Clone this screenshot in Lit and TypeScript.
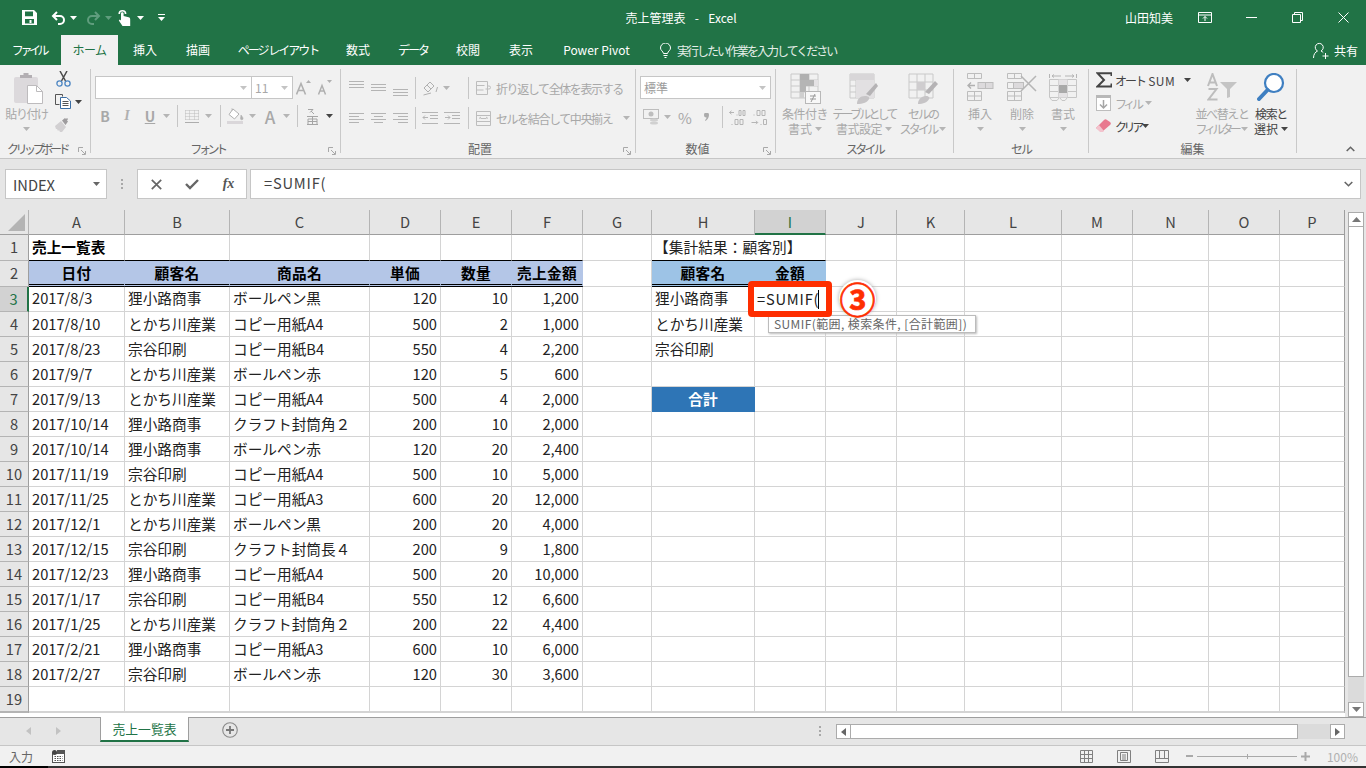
import { LitElement, html, css, nothing } from 'lit';
import { customElement } from 'lit/decorators.js';

const caret = (color = '#b5b5b5') => html`<svg class="caret" width="7" height="4" viewBox="0 0 7 4"><path d="M0 0h7L3.5 4z" fill=${color}/></svg>`;

const launcher = () => html`<svg width="8" height="8" viewBox="0 0 8 8"><path d="M.5 5V.5H5M3 3l4 4M7.5 4v3.5H4" fill="none" stroke="#a8a8a8"/></svg>`;

const lines = (ys: number[], widths: number[], dx: number[] = []) => html`<svg width="15" height="15" viewBox="0 0 15 15"><path d=${ys.map((y, i) => `M${dx[i] ?? 0} ${y + 0.5}h${widths[i]}`).join('')} stroke="#b4b4b4" fill="none"/></svg>`;

const icons = {
  save: html`<svg width="15" height="15" viewBox="0 0 15 15"><path fill-rule="evenodd" d="M0 0h12l3 3v12H0zM3 1.6v4.6h8V1.6zM3 9v4.4h9V9z" fill="#fff"/><rect x="7.5" y="10" width="2" height="3" fill="#fff"/></svg>`,
  undo: html`<svg width="15" height="14" viewBox="0 0 15 14"><path d="M6 1 2 5l4 4M2.5 5H9a4 4 0 0 1 0 8H7" fill="none" stroke="#fff" stroke-width="2"/></svg>`,
  redo: html`<svg width="15" height="14" viewBox="0 0 15 14"><path d="M9 1l4 4-4 4M12.5 5H6a4 4 0 0 0 0 8h2" fill="none" stroke="#5f9d7d" stroke-width="2"/></svg>`,
  touch: html`<svg width="13" height="17" viewBox="0 0 13 17"><path d="M1.2 5a3.2 3.2 0 0 1 6.4 0" fill="none" stroke="#fff" stroke-width="1.6"/><path d="M3 4.500a1.300 1.300 0 0 1 2.600 0V7l5 1.200c1.200.3 1.600 1.200 1.600 2.300V17H4.500L.8 11.600l1-1L3 11.500z" fill="#fff"/></svg>`,
  custom: html`<svg width="7" height="7" viewBox="0 0 7 7"><path d="M0 .5h7" stroke="#fff"/><path d="M0 3h7L3.500 7z" fill="#fff"/></svg>`,
  ribbonOpt: html`<svg width="14" height="11" viewBox="0 0 14 11"><path d="M.5.5h13v10H.5zM.5 3h13M7 9V4.500M5 6.500l2-2 2 2" fill="none" stroke="#fff"/></svg>`,
  min: html`<svg width="11" height="1" viewBox="0 0 11 1"><path d="M0 .5h11" stroke="#fff"/></svg>`,
  restore: html`<svg width="11" height="11" viewBox="0 0 11 11"><path d="M.5 2.500h8v8h-8zM2.500 2.500v-2h8v8h-2" fill="none" stroke="#fff"/></svg>`,
  close: html`<svg width="11" height="11" viewBox="0 0 11 11"><path d="M.5.5l10 10M10.500.5l-10 10" stroke="#fff"/></svg>`,
  bulb: html`<svg width="11" height="15" viewBox="0 0 11 15"><path d="M3.500 10.500C3 8 .5 7.500.5 5a5 5 0 0 1 10 0c0 2.500-2.500 3-3 5.500zM3.500 12.500h4M4.500 14.500h2" fill="none" stroke="#fff"/></svg>`,
  share: html`<svg width="16" height="17" viewBox="0 0 16 17"><path d="M.5 16c0-4 2-6 4-7a4 4 0 1 1 3.500 0c1 .4 1.700 1 2.300 1.700M12.500 11v6M9.500 14h6" fill="none" stroke="#fff"/></svg>`,
  paste: html`<svg width="30" height="31" viewBox="0 0 30 31"><rect x="0" y="4" width="24" height="26" rx="2" fill="#dcd9dc"/><path d="M6 5V2h3.500V0h5v2H18v3z" fill="#b3afb3"/><path d="M13.500 12.500h9l6 6v12h-15z" fill="#fff" stroke="#bdbbbd"/><path d="M22.500 12.500v6h6" fill="none" stroke="#bdbbbd"/></svg>`,
  cut: html`<svg width="15" height="16" viewBox="0 0 15 16"><path d="M4 0l5.500 10M11 0 5.500 10" stroke="#4a4a4a" stroke-width="1.500" fill="none"/><circle cx="3.500" cy="12.500" r="2.600" fill="none" stroke="#4d86c2" stroke-width="1.300"/><circle cx="11.500" cy="12.500" r="2.600" fill="none" stroke="#4d86c2" stroke-width="1.300"/></svg>`,
  copy: html`<svg width="16" height="15" viewBox="0 0 16 15"><path d="M.5.5h7v2M.5.500v10h4" fill="none" stroke="#555"/><path d="M5.500 3.500h6l4 3.500v7.500h-10z" fill="#fff" stroke="#3c6ea5"/><path d="M7.500 7.500h6M7.500 9.500h6M7.500 11.500h6" stroke="#555"/></svg>`,
  brush: html`<svg width="16" height="14" viewBox="0 0 16 14"><path d="M0 8l6-5 5 6-4 5H5l-1-2-1 1-1-2-1 0z" fill="#d2d0d2"/><path d="M7 2.500 10 0l1 1 1-1 1 1-1 1.500 1 1-2.500 3.500z" fill="#9e9c9e"/></svg>`,
  aUp: html`<svg width="15" height="15" viewBox="0 0 15 15"><path d="M.5 14.500 5 3.500l4.500 11M2.200 10.500h5.600" fill="none" stroke="#b0b0b0" stroke-width="1.600"/><path d="M10 3h5L12.500 0z" fill="#b0b0b0"/></svg>`,
  aDown: html`<svg width="15" height="15" viewBox="0 0 15 15"><path d="M1.500 14.500 5 5.500l3.500 9M2.800 11h4.400" fill="none" stroke="#b0b0b0" stroke-width="1.500"/><path d="M10 0h5l-2.500 3z" fill="#b0b0b0"/></svg>`,
  borders: html`<svg width="14" height="13" viewBox="0 0 14 13"><path d="M.5.500h13M.500 3.500h13M.500 6.500h13M.500 9.500h13M.500.5v9M4.500.5v9M9.500.5v9M13.500.5v9" fill="none" stroke="#bdbdbd" stroke-dasharray="1 1"/><path d="M0 12.500h14" stroke="#adadad"/></svg>`,
  fill: html`<svg width="17" height="16" viewBox="0 0 17 16"><path d="M6 1l6 5-4.500 5L2 6.500z" fill="#fff" stroke="#b0b0b0"/><path d="M5 3 5 0M14 7c1 1.500 2 2.500 2 3.500a1 1 0 0 1-2.500 0c0-1 .5-2 .5-3.500z" fill="#b0b0b0" stroke="#b0b0b0" stroke-width=".6"/><rect y="13" width="16" height="3" fill="#dad7da"/></svg>`,
  furi: html`<svg width="12" height="17" viewBox="0 0 12 17"><path d="M2 1.500h5l-3 3M5 3l3 3M1 8.500h11M1 16.500h11M2 11h9v5.500H2zM6.500 8.500v8M2 13.500h9" fill="none" stroke="#a5a5a5"/></svg>`,
  orient: html`<svg width="15" height="15" viewBox="0 0 15 15"><path d="M1 7 7 1l4 4-6 6zM4 4l4 4M.5 14 8 12M13 11l1.500-5" fill="none" stroke="#b0b0b0"/></svg>`,
  indentL: html`<svg width="16" height="12" viewBox="0 0 16 12"><path d="M0 .500h16M8 3.500h8M8 6.500h8M0 11.500h16" stroke="#b5b5b5"/><path d="M6 5.500H1M3 3.500l-2 2 2 2" fill="none" stroke="#b5b5b5"/></svg>`,
  indentR: html`<svg width="16" height="12" viewBox="0 0 16 12"><path d="M0 .500h16M8 3.500h8M8 6.500h8M0 11.500h16" stroke="#b5b5b5"/><path d="M1 5.500h5M4 3.500l2 2-2 2" fill="none" stroke="#b5b5b5"/></svg>`,
  wrap: html`<svg width="15" height="14" viewBox="0 0 15 14"><path d="M.5.5h11v13H.5zM.5 4.500h8M.5 9h7" fill="none" stroke="#bdbdbd"/><path d="M9.500 8H13a1.500 1.500 0 0 0 0-3h-2" fill="none" stroke="#bdbdbd"/></svg>`,
  merge: html`<svg width="15" height="15" viewBox="0 0 15 15"><path d="M.5.5h14v14H.5zM.5 4.500h14M.5 10.500h14M4.500 7.500h6M3 7.500l2-1.500M12 7.500l-2-1.500" fill="none" stroke="#bdbdbd"/></svg>`,
  account: html`<svg width="16" height="17" viewBox="0 0 16 17"><rect x=".5" y=".5" width="15" height="9" fill="none" stroke="#bdbdbd"/><circle cx="8" cy="5" r="2.500" fill="#bdbdbd"/><ellipse cx="11" cy="11" rx="4" ry="1.500" fill="#d0d0d0"/><ellipse cx="11" cy="14" rx="4" ry="1.500" fill="#d0d0d0"/></svg>`,
  comma: html`<svg width="5" height="8" viewBox="0 0 5 8"><path d="M0 2a2.500 2.500 0 1 1 5 0c0 3-2 5-3.500 6L1 7c1-.7 1.500-1.500 1.500-2.500A2.500 2.500 0 0 1 0 2z" fill="#ababab"/></svg>`,
  decUp: html`<svg width="17" height="15" viewBox="0 0 17 15"><path d="M5 2.500H.5M2.500.8.500 2.500l2 1.700" fill="none" stroke="#b5b5b5"/><path d="M8 4.500v1M10 .5h2v5h-2zM14 .5h2v5h-2zM3 14v1M6 9.500h3v5H6zM11 9.500h3v5h-3z" fill="none" stroke="#b5b5b5"/></svg>`,
  decDown: html`<svg width="17" height="15" viewBox="0 0 17 15"><path d="M.5 12.500h6M5 10.800l1.700 1.700L5 14.200" fill="none" stroke="#b5b5b5"/><path d="M3 4.500v1M6 .5h3v5H6zM11 .5h3v5h-3zM10 14v1M12.500 9.500h3v5h-3z" fill="none" stroke="#b5b5b5"/></svg>`,
  cond: html`<svg width="31" height="31" viewBox="0 0 31 31"><path d="M1 1h27v24H1zM1 7h27M1 13h27M1 19h27M10 1v24M19 1v24" fill="none" stroke="#c9c9c9"/><rect x="10" y="1" width="9" height="6" fill="#b0b0b0"/><rect x="10" y="7" width="18" height="6" fill="#e4e2e4"/><rect x="10" y="7" width="14" height="6" fill="#b5b5b5"/><rect x="10" y="13" width="6" height="6" fill="#b5b5b5"/><rect x="10" y="19" width="4" height="6" fill="#cfcfcf"/><rect x="15.500" y="18.500" width="15" height="12" fill="#f8f8f8" stroke="#b8b8b8"/><path d="M20 23h6M20 26h6M25 21l-4 8" fill="none" stroke="#999"/></svg>`,
  table: html`<svg width="30" height="31" viewBox="0 0 30 31"><path d="M1 1h24v24H1zM1 7h24M1 13h24M1 19h24M7 1v24M13 1v24M19 1v24" fill="none" stroke="#c9c9c9"/><rect x="1" y="1" width="24" height="6" fill="#d8d6d8"/><rect x="7" y="7" width="18" height="18" fill="#e2e0e2"/><path d="M17 21l10-11 2 3-8 10z" fill="#b5b3b5"/><path d="M8 31c0-5 3-8 8-8 3 0 5 1 4 3-1 3-6 5-12 5z" fill="#c6c4c6"/></svg>`,
  cellStyle: html`<svg width="31" height="31" viewBox="0 0 31 31"><path d="M1 1h24v24H1zM1 9h24M1 17h24M9 1v24M17 1v24" fill="none" stroke="#c9c9c9"/><rect x="9" y="9" width="8" height="8" fill="#cfcdcf"/><path d="M17 19l10-11 3 3-9 10z" fill="#b5b3b5"/><path d="M10 31c0-4 3-8 8-8 3 0 4 2 3 3-1 3-6 5-11 5z" fill="#c6c4c6"/></svg>`,
  insert: html`<svg width="27" height="28" viewBox="0 0 27 28"><path d="M.5.5h14v5H.5zM7.500.5v5M.5 18.500h14v9H.5zM.5 23h14M7.500 18.500v9" fill="none" stroke="#bdbdbd"/><rect x="11" y="9.500" width="15" height="6" fill="#dcdadc" stroke="#bdbdbd"/><path d="M18.500 9.500v6" stroke="#bdbdbd"/><path d="M8 12.500H1M4 9.500l-3 3 3 3" fill="none" stroke="#b0b0b0" stroke-width="1.400"/></svg>`,
  del: html`<svg width="30" height="28" viewBox="0 0 30 28"><path d="M.5.5h14v5H.5zM7.500.5v5M.5 18.500h14v9H.5zM.5 23h14M7.500 18.500v9M.5 9.500h6v6h-6z" fill="none" stroke="#bdbdbd"/><rect x="6.500" y="9.500" width="10" height="6" fill="#dcdadc" stroke="#bdbdbd"/><path d="M14 3l15 15M29 3 14 18" stroke="#b5b5b5" stroke-width="1.500"/></svg>`,
  format: html`<svg width="28" height="28" viewBox="0 0 28 28"><path d="M.5 1v4M27.500 1v4M3 3h9M16 3h9M3 3l2-1.500M3 3l2 1.500M25 3l-2-1.500M25 3l-2 1.500" fill="none" stroke="#b5b5b5"/><path d="M.5 6.500h27v18H.5zM.5 12.500h27M.5 18.500h27M9.500 6.500v18M18.500 6.500v18M1 25l2 2.500h5l2-2.500M11 25l2 2.500h3l2-2.500" fill="none" stroke="#c6c6c6"/><rect x="9.500" y="6.500" width="9" height="18" fill="#e4e2e4"/><rect x="10" y="12" width="8" height="8" fill="#a9a9a9"/></svg>`,
  sigma: html`<svg width="16" height="16" viewBox="0 0 16 16"><path d="M15.500 4V1.200H1.500L8 8 1.500 14.500h14V11.500" fill="none" stroke="#444" stroke-width="2"/></svg>`,
  fillDown: html`<svg width="15" height="16" viewBox="0 0 15 16"><rect x=".5" y=".5" width="14" height="15" fill="#fff" stroke="#bdbdbd"/><rect x="0" y="0" width="15" height="3" fill="#b8b8b8"/><path d="M7.500 5v8M4 9.500l3.500 3.500 3.500-3.500" fill="none" stroke="#a5a5a5" stroke-width="1.500"/></svg>`,
  eraser: html`<svg width="15" height="14" viewBox="0 0 15 14"><path d="M0 9l8-8a2 2 0 0 1 3 0l3 2a2 2 0 0 1 0 3l-7 6H4z" fill="#e8798f"/><path d="M0 9l4 4h3l1-1-5-6z" fill="#f3c3cd"/></svg>`,
  sort: html`<svg width="31" height="28" viewBox="0 0 31 28"><path d="M1 13 5.500 1 10 13M2.500 9.500h6M1.500 16h8l-8 10.500h9" fill="none" stroke="#bdbdbd" stroke-width="2"/><path d="M13 9h17l-7 7v8l-3 1v-9z" fill="#c4c4c4"/></svg>`,
  search: html`<svg width="28" height="28" viewBox="0 0 28 28"><circle cx="17" cy="10" r="9" fill="#fff" stroke="#3f7fc1" stroke-width="2.200"/><path d="M10.500 17 2 26" stroke="#3f7fc1" stroke-width="4" stroke-linecap="round"/></svg>`,
  collapse: html`<svg width="9" height="6" viewBox="0 0 9 6"><path d="M.7 5 4.500 1.300 8.300 5" fill="none" stroke="#666" stroke-width="1.600"/></svg>`,
  expand: html`<svg width="9" height="6" viewBox="0 0 9 6"><path d="M.7 1 4.500 4.700 8.300 1" fill="none" stroke="#666" stroke-width="1.600"/></svg>`,
  x: html`<svg width="11" height="11" viewBox="0 0 11 11"><path d="M.8.8l9.400 9.400M10.200.8.800 10.200" stroke="#666" stroke-width="1.700"/></svg>`,
  check: html`<svg width="14" height="11" viewBox="0 0 14 11"><path d="M1 5l4 4 8-8" fill="none" stroke="#666" stroke-width="2.400"/></svg>`,
  corner: html`<svg width="17" height="17" viewBox="0 0 17 17"><path d="M17 0v17H0z" fill="#b4b4b4"/></svg>`,
  plusC: html`<svg width="16" height="16" viewBox="0 0 16 16"><circle cx="8" cy="8" r="7.300" fill="none" stroke="#8a8a8a" stroke-width="1.100"/><path d="M8 4v8M4 8h8" stroke="#777" stroke-width="1.800"/></svg>`,
  macro: html`<svg width="13" height="13" viewBox="0 0 13 13"><rect x=".5" y="3.500" width="12" height="9" fill="#fff" stroke="#555"/><rect x="5" y="0" width="8" height="3" fill="#555"/><circle cx="2.500" cy="2.500" r="2.500" fill="#444"/><path d="M2.500 6.500h8M2.500 8.500h8M2.500 10.500h8" stroke="#555" stroke-dasharray="1.500 1"/></svg>`,
  viewNormal: html`<svg width="13" height="13" viewBox="0 0 13 13"><path d="M.5.5h12v12H.5zM.5 4.500h12M.5 8.500h12M4.500.5v12M8.500.5v12" fill="none" stroke="#808080"/></svg>`,
  viewPage: html`<svg width="14" height="13" viewBox="0 0 14 13"><path d="M.5.5h13v12H.5z" fill="none" stroke="#808080"/><path d="M3.500 2.500h7v8h-7zM5 5h4M5 7h4M5 9h4" fill="none" stroke="#808080"/></svg>`,
  viewBreak: html`<svg width="14" height="13" viewBox="0 0 14 13"><path d="M.5.5h13v12H.5zM.5 8.500h13M4.500.5v8M9.500.5v8" fill="none" stroke="#808080"/></svg>`,
};

const ROWS: string[][] = [
  ['2017/8/3', '狸小路商事', 'ボールペン黒', '120', '10', '1,200'],
  ['2017/8/10', 'とかち川産業', 'コピー用紙A4', '500', '2', '1,000'],
  ['2017/8/23', '宗谷印刷', 'コピー用紙B4', '550', '4', '2,200'],
  ['2017/9/7', 'とかち川産業', 'ボールペン赤', '120', '5', '600'],
  ['2017/9/13', 'とかち川産業', 'コピー用紙A4', '500', '4', '2,000'],
  ['2017/10/14', '狸小路商事', 'クラフト封筒角２', '200', '10', '2,000'],
  ['2017/10/14', '狸小路商事', 'ボールペン赤', '120', '20', '2,400'],
  ['2017/11/19', '宗谷印刷', 'コピー用紙A4', '500', '10', '5,000'],
  ['2017/11/25', 'とかち川産業', 'コピー用紙A3', '600', '20', '12,000'],
  ['2017/12/1', 'とかち川産業', 'ボールペン黒', '200', '20', '4,000'],
  ['2017/12/15', '宗谷印刷', 'クラフト封筒長４', '200', '9', '1,800'],
  ['2017/12/23', '狸小路商事', 'コピー用紙A4', '500', '20', '10,000'],
  ['2017/1/17', '宗谷印刷', 'コピー用紙B4', '550', '12', '6,600'],
  ['2017/1/25', 'とかち川産業', 'クラフト封筒角２', '200', '22', '4,400'],
  ['2017/2/21', '狸小路商事', 'コピー用紙A3', '600', '10', '6,000'],
  ['2017/2/27', '宗谷印刷', 'ボールペン赤', '120', '30', '3,600'],
];
const COLS = 'ABCDEFGHIJKLMNOP'.split('');
const HEADS = ['日付', '顧客名', '商品名', '単価', '数量', '売上金額'];
const CUSTOMERS = ['狸小路商事', 'とかち川産業', '宗谷印刷'];

@customElement('app-root')
export class AppRoot extends LitElement {
  static styles = css`
    :host { display: block; width: 1366px; height: 768px; overflow: hidden; font-family: 'Noto Sans CJK JP', 'Liberation Sans', sans-serif; font-size: 12px; color: #444; }
    svg { display: block; }
    .app { width: 1366px; height: 768px; display: flex; flex-direction: column; background: #e6e6e6; }
    .tight1 { letter-spacing: -0.5px; }
    .tight2 { letter-spacing: -1.4px; }
    .tight3 { letter-spacing: -2px; }
    .tight5 { letter-spacing: -2.8px; }
    .tight4 { letter-spacing: -3.4px; }
    .wide { letter-spacing: .5px; }

    /* title bar */
    .title { height: 35px; background: #217346; color: #fff; display: grid; grid-template-columns: 1fr auto 1fr; align-items: center; }
    .qat { display: grid; grid-template-columns: 45px 12px 18px 22px 8px 24px 8px 34px; padding-left: 7px; height: 32px; align-items: center; justify-items: center; }
    .doc { white-space: pre; word-spacing: 2px; margin-right: 4px; line-height: 32px; height: 32px; }
    .winctl { display: flex; justify-content: flex-end; align-items: center; height: 32px; }
    .winctl span { margin-right: 9px; }
    .winctl div { width: 46px; display: flex; justify-content: center; }

    /* tabs */
    .tabs { height: 30px; background: #217346; color: #fff; display: grid; grid-template-columns: 61px 57px 54px 52px 108px 52px 58px 52px 54px 97px auto 1fr; align-items: stretch; }
    .tab { display: flex; align-items: center; justify-content: center; padding-bottom: 1px; white-space: pre; }
    .tab.on { background: #f1f1f1; color: #217346; }
    .tab.file { padding-right: 3px; }
    .tell { display: flex; align-items: center; margin-left: 15px; gap: 6px; color: #e6efe9; }
    .sharebox { display: flex; justify-content: flex-end; align-items: center; gap: 5px; padding-right: 8px; }

    /* ribbon */
    .ribbon { height: 94px; box-sizing: border-box; background: #f1f1f1; border-bottom: 1px solid #c6c6c6; padding-top: 4px; display: flex; color: #a8a8a8; flex: none; }
    .group { height: 84px; box-sizing: border-box; border-right: 1px solid #c9c9c9; display: flex; flex-direction: column; flex: none; }
    .g-clip { width: 91px; } .g-font { width: 250px; } .g-align { width: 295px; } .g-num { width: 140px; } .g-style { width: 178px; } .g-cell { width: 135px; } .g-edit { width: 208px; }
    .body { height: 71px; flex: none; }
    .label { height: 14px; flex: none; display: grid; grid-template-columns: 1fr auto 1fr; align-items: center; color: #666; line-height: 14px; margin-top: 2px; }
    .label.l { grid-template-columns: 1fr auto 1fr 16px; }
    .label span { grid-column: 2; white-space: nowrap; }
    .label svg { grid-column: 4; justify-self: end; margin-right: 4px; margin-top: 3px; }
    .row { display: grid; align-items: center; justify-items: center; }
    .vsep { width: 1px; height: 22px; background: #c6c6c6; display: block; }

    .clip { display: grid; grid-template-columns: 53px 37px; }
    .clip .pic { padding-left: 5px; }
    .bigbtn { display: flex; flex-direction: column; align-items: center; line-height: 14.5px; white-space: nowrap; }
    .bigbtn .pic { height: 34px; display: flex; align-items: flex-start; padding-top: 4px; }
    .bigbtn .ln { display: flex; align-items: center; gap: 3px; height: 14.5px; }
    .bigbtn .dn { height: 14.5px; display: flex; align-items: center; }
    .dark { color: #444; }
    .mini { display: grid; grid-template-columns: 20px 10px; grid-template-rows: 20px 25px 21px; align-items: center; justify-items: center; }
    .mini > :nth-child(1) { grid-column: 1; grid-row: 1; }
    .mini > :nth-child(2) { grid-column: 2; grid-row: 2; }
    .mini > :nth-child(3) { grid-column: 1; grid-row: 2; }
    .mini > :nth-child(4) { grid-column: 1; grid-row: 3; }

    .stack { padding: 7px 0 0 4px; display: flex; flex-direction: column; gap: 6px; }
    .box { background: #fff; border: 1px solid #c6c6c6; box-sizing: border-box; height: 23px; display: flex; align-items: center; justify-content: space-between; padding: 0 4px 0 3px; }
    .fontrow { display: grid; grid-template-columns: 157px 41px 20px 23px; align-items: center; height: 23px; justify-items: center; }
    .fontrow .box { justify-self: stretch; }
    .fontrow .box + .box { margin-left: -1px; }
    .font2 { grid-template-columns: 20px 24px 22px 10px 12px 18px 14px 10px 21px 12px 24px 8px 14px 16px 18px; height: 22px; }
    .gl { font-weight: 700; font-size: 14px; color: #a8a8a8; line-height: 1; }
    .it { font-style: italic; font-weight: 700; font-size: 14px; color: #b0b0b0; font-family: 'Liberation Serif', serif; }
    .un { text-decoration: underline; font-weight: 700; font-size: 14px; color: #a8a8a8; }
    .bigA { font-size: 17px; font-weight: 500; color: #a8a8a8; line-height: 1; }
    .pct { font-size: 15px; color: #a8a8a8; line-height: 1; }

    .alignwrap { padding: 4px 0 0 4px; display: flex; flex-direction: column; }
    .al { grid-template-columns: 22px 22px 22px 8px 22px 10px 13px 8px 4px auto; height: 30px; }
    .al2 { grid-template-columns: 22px 22px 22px 8px 22px 22px 1px 8px 4px auto; height: 30px; }
    .wrapcell { justify-self: start; display: flex; align-items: center; gap: 5px; white-space: nowrap; }
    .wrapcell .caret { margin-left: 6px; }
    .num2 { grid-template-columns: 22px 10px 26px 16px 16px 15px 28px; height: 22px; margin-top: 7px; }
    .numwrap { padding: 7px 0 0 4px; width: 131px; }
    .numwrap .box { width: 131px; color: #9c9c9c; }
    .trio { display: grid; grid-template-columns: 58px 60px 58px; }
    .cells { display: grid; grid-template-columns: 42px 42px 40px; padding-left: 5px; }
    .editgrid { display: grid; grid-template-columns: 103px 60px 38px; }
    .edit3 { display: grid; grid-template-rows: 22px 24px 22px; padding-left: 7px; }
    .edititem { display: flex; align-items: center; white-space: nowrap; }
    .edititem .ei { width: 19px; flex: none; }
    .gap10 { margin-left: 9px; }
    .gap4 { margin-left: 4px; }
    .gap3 { margin-left: 1px; }
    .ribbontail { flex: 1; display: flex; justify-content: flex-end; align-items: flex-end; padding: 0 11px 1px 0; height: 84px; box-sizing: border-box; }

    /* formula bar */
    .fbar { height: 51px; box-sizing: border-box; padding: 10px 5px 11px 5px; display: flex; background: #e6e6e6; flex: none; }
    .namebox, .fbtns, .finput { background: #fff; border: 1px solid #c6c6c6; box-sizing: border-box; height: 30px; display: flex; align-items: center; }
    .namebox { width: 102px; justify-content: space-between; padding: 0 6px 0 7px; font-size: 14.67px; color: #444; }
    .fdots { width: 30px; display: flex; flex-direction: column; align-items: center; justify-content: center; gap: 2px; }
    .fdots i { width: 2px; height: 2px; background: #a8a8a8; display: block; }
    .fbtns { width: 110px; display: grid; grid-template-columns: 36px 36px 37px; justify-items: center; align-items: center; }
    .fx { font-family: 'Liberation Serif', serif; font-style: italic; font-weight: 700; font-size: 14px; color: #555; }
    .finput { flex: 1; margin-left: 3px; justify-content: space-between; padding: 0 7px 0 13px; font-size: 14.67px; color: #444; letter-spacing: .8px; line-height: 26px; }
    .finput span { margin-top: -2px; }

    /* sheet */
    .sheetrow { height: 507px; display: flex; flex: none; }
    .gridwrap { width: 1345px; height: 507px; position: relative; overflow: hidden; background: #fff; flex: none; }
    .grid { display: grid; grid-template-columns: 29px 96px 105px 140px 71px 71px 71px 69px 103px 71px 71px 68px 97px 71px 76px 71px 65px; grid-template-rows: 25px 26px 26px repeat(17, 25px); font-size: 14.67px; color: #222; }
    .c { box-sizing: border-box; border-right: 1px solid #d4d4d4; border-bottom: 1px solid #d4d4d4; white-space: nowrap; line-height: 24px; padding: 0 3px; min-width: 0; }
    .row3 { line-height: 22px; }
    .colh, .rowh, .corner { background: #e6e6e6; color: #444; text-align: center; padding: 0; border-right-color: #b4b4b4; border-bottom-color: #9e9e9e; line-height: 24px; }
    .corner { display: flex; align-items: flex-end; justify-content: flex-end; padding: 0 3px 3px 0; }
    .rowh { border-right-color: #9e9e9e; border-bottom-color: #b4b4b4; }
    .colh.sel { background: #d2d2d2; border-bottom: 2px solid #217346; color: #217346; }
    .rowh.sel { background: #d2d2d2; border-right: 2px solid #217346; color: #217346; }
    .edge { border-right-color: #9e9e9e; }
    .r { text-align: right; }
    .span2 { grid-column: span 2; }
    .b { font-weight: 700; color: #000; }
    .h1 { color: #222; padding-left: 2px; letter-spacing: .1px; }
    .topline { border-bottom-color: #000; }
    .hd { background: #b4c6e7; border-right-color: #b4c6e7; border-bottom: 3px double #000; text-align: center; font-weight: 700; color: #000; line-height: 23px; letter-spacing: .3px; }
    .hd2 { background: #9dc3e6; border-right-color: #9dc3e6; }
    .total { background: #2e75b6; border-right-color: #2e75b6; border-bottom-color: #2e75b6; color: #fff; font-weight: 700; text-align: center; }
    .redbox { position: absolute; left: 748px; top: 71px; width: 84px; height: 36px; box-sizing: border-box; border: 6px solid #fe2e00; border-radius: 4px; background: #fff; font-size: 14.67px; line-height: 23px; padding-left: 3px; color: #222; white-space: nowrap; overflow: hidden; z-index: 3; letter-spacing: .8px; }
    .redbox i { display: inline-block; width: 1px; height: 19px; background: #000; vertical-align: -4px; margin-left: -1px; }
    .tip { position: absolute; left: 768px; top: 105px; width: 208px; height: 18px; box-sizing: border-box; background: #fff; border: 1px solid #bcbcbc; box-shadow: 1px 1px 2px #bbb; color: #666; font-size: 12px; line-height: 16px; padding-left: 5px; white-space: nowrap; z-index: 2; letter-spacing: .4px; }
    .badge { position: absolute; left: 839px; top: 70px; width: 37px; height: 36px; border-radius: 50%; background: #fff; box-shadow: 0 0 4px #aaa; color: #fe2e00; font-size: 36px; font-weight: 700; line-height: 36px; text-align: center; z-index: 3; -webkit-text-stroke: .7px #fe2e00; }

    /* scrollbars */
    .vbar { flex: 1; box-sizing: border-box; padding: 2px 2px 0 3px; display: flex; flex-direction: column; }
    .sbtn { background: #fff; border: 1px solid #ababab; box-sizing: border-box; display: flex; align-items: center; justify-content: center; flex: none; }
    .vbar .sbtn { height: 15px; }
    .vthumb { height: 450px; box-sizing: border-box; background: #fff; border: 1px solid #ababab; border-top: 0; flex: none; }
    .vtrack { flex: 1; background: #dbdbdb; }
    .tabbar { height: 28px; border-top: 1px solid #9e9e9e; box-sizing: border-box; display: flex; background: #e6e6e6; flex: none; }
    .nav { width: 100px; display: grid; grid-template-columns: 31px 30px; justify-items: end; align-items: center; height: 26px; }
    .sheettab { width: 89px; height: 25px; box-sizing: border-box; margin-top: -1px; background: #fff; border: solid #9e9e9e; border-width: 0 1px; border-bottom: 2px solid #217346; color: #217346; font-size: 12.8px; text-align: center; line-height: 23px; flex: none; }
    .plus { margin-left: 33px; margin-top: 4px; flex: none; }
    .hdots { margin-left: 574px; width: 16px; height: 26px; display: flex; flex-direction: column; align-items: center; justify-content: center; gap: 2px; flex: none; }
    .hdots i { width: 2px; height: 2px; background: #a8a8a8; display: block; }
    .hbar { width: 509px; height: 15px; margin-top: 6px; margin-left: 8px; display: flex; flex: none; }
    .hbar .sbtn { width: 15px; height: 15px; }
    .hthumb { width: 447px; height: 15px; background: #fff; border: solid #ababab; border-width: 1px 1px 1px 0; box-sizing: border-box; }
    .htrack { flex: 1; background: #dbdbdb; }

    /* status bar */
    .status { height: 21px; box-sizing: border-box; border-top: 1px solid #c6c6c6; background: #f1f1f1; display: flex; align-items: center; padding-left: 9px; color: #666; flex: none; }
    .status .macro { margin-left: 19px; }
    .statright { margin-left: auto; display: grid; grid-template-columns: 38px 38px 38px 16px 100px 16px 45px; align-items: center; justify-items: center; padding-right: 8px; }
    .slider { width: 100px; height: 1px; background: #a9a9a9; display: flex; justify-content: center; align-items: center; }
    .slider i { width: 1px; height: 5px; background: #a9a9a9; display: block; }
    .zm { color: #b0b0b0; justify-self: end; }
    .bottomedge { height: 2px; background: #333; flex: none; }
    .bottomedge i { display: block; width: 48px; height: 2px; background: #000; }
  `;

  private group(cls: string, label: string, labelCls: string, hasLauncher: boolean, body: unknown) {
    return html`<div class="group ${cls}">
      <div class="body">${body}</div>
      <div class="label ${hasLauncher ? 'l' : ''}"><span class=${labelCls}>${label}</span>${hasLauncher ? launcher() : nothing}</div>
    </div>`;
  }

  private big(pic: unknown, l1: string, l2: string, cls1 = '', cls2 = '', dark = false) {
    return html`<div class="bigbtn ${dark ? 'dark' : ''}">
      <div class="pic">${pic}</div>
      <div class="ln ${cls1}">${l1}</div>
      ${l2
        ? html`<div class="ln"><span class=${cls2}>${l2}</span>${caret(dark ? '#444' : '#b5b5b5')}</div>`
        : html`<div class="dn">${caret()}</div>`}
    </div>`;
  }

  private ribbon() {
    return html`<div class="ribbon">
      ${this.group('g-clip', 'クリップボード', 'tight4', true, html`<div class="clip">
        ${this.big(icons.paste, '貼り付け', '', 'tight2')}
        <div class="mini">${icons.cut}${caret('#444')}${icons.copy}${icons.brush}</div>
      </div>`)}
      ${this.group('g-font', 'フォント', 'tight4', true, html`<div class="stack">
        <div class="fontrow">
          <div class="box"><span></span>${caret('#c4c4c4')}</div>
          <div class="box"><span>11</span>${caret('#c4c4c4')}</div>
          ${icons.aUp}${icons.aDown}
        </div>
        <div class="row font2">
          <span class="gl">B</span><span class="it">I</span><span class="un">U</span>${caret()}<i class="vsep"></i>
          ${icons.borders}${caret()}<i class="vsep"></i>
          ${icons.fill}${caret()}<span class="bigA">A</span>${caret()}<i class="vsep"></i>
          ${icons.furi}${caret('#444')}
        </div>
      </div>`)}
      ${this.group('g-align', '配置', '', true, html`<div class="alignwrap">
        <div class="row al">
          ${lines([0, 3, 6], [15, 15, 15])}${lines([3, 6, 9], [15, 15, 15])}${lines([8, 11, 14], [15, 15, 15])}<i class="vsep"></i>
          ${icons.orient}${caret()}<i></i><i class="vsep"></i><i></i>
          <div class="wrapcell">${icons.wrap}<span class="tight2">折り返して全体を表示する</span></div>
        </div>
        <div class="row al2">
          ${lines([2, 5, 8, 11], [15, 10, 15, 10])}${lines([2, 5, 8, 11], [15, 9, 15, 9], [0, 3, 0, 3])}${lines([2, 5, 8, 11], [15, 10, 15, 10], [0, 5, 0, 5])}<i class="vsep"></i>
          ${icons.indentL}${icons.indentR}<i></i><i class="vsep"></i><i></i>
          <div class="wrapcell">${icons.merge}<span class="tight2">セルを結合して中央揃え</span>${caret()}</div>
        </div>
      </div>`)}
      ${this.group('g-num', '数値', '', true, html`<div class="numwrap">
        <div class="box"><span>標準</span>${caret('#c4c4c4')}</div>
        <div class="row num2">
          ${icons.account}${caret()}<span class="pct">%</span>${icons.comma}<i class="vsep"></i>${icons.decUp}${icons.decDown}
        </div>
      </div>`)}
      ${this.group('g-style', 'スタイル', 'tight5', false, html`<div class="trio">
        ${this.big(icons.cond, '条件付き', '書式', 'tight1')}
        ${this.big(icons.table, 'テーブルとして', '書式設定', 'tight5', 'tight1')}
        ${this.big(icons.cellStyle, 'セルの', 'スタイル', 'tight3', 'tight5')}
      </div>`)}
      ${this.group('g-cell', 'セル', 'tight3', false, html`<div class="cells">
        ${this.big(icons.insert, '挿入', '')}
        ${this.big(icons.del, '削除', '')}
        ${this.big(icons.format, '書式', '')}
      </div>`)}
      ${this.group('g-edit', '編集', '', false, html`<div class="editgrid">
        <div class="edit3">
          <div class="edititem dark">
            <span class="ei">${icons.sigma}</span><span class="tight3">オート</span><span class="wide">&nbsp;SUM</span><span class="gap10">${caret('#444')}</span>
          </div>
          <div class="edititem">
            <span class="ei">${icons.fillDown}</span><span class="tight4">フィル</span><span class="gap4">${caret()}</span>
          </div>
          <div class="edititem dark">
            <span class="ei">${icons.eraser}</span><span class="tight4">クリア</span><span class="gap3">${caret('#444')}</span>
          </div>
        </div>
        ${this.big(icons.sort, '並べ替えと', 'フィルター', 'tight2', 'tight4')}
        ${this.big(icons.search, '検索と', '選択', 'tight2', '', true)}
      </div>`)}
      <div class="ribbontail">${icons.collapse}</div>
    </div>`;
  }

  private cell(col: number, row: number) {
    // col 1..16 = A..P, row 1..20
    const last = col === 16 ? 'edge' : '';
    const r3 = row === 3 ? 'row3' : '';
    if (row === 1) {
      if (col === 1) return html`<div class="c b topline">売上一覧表</div>`;
      if (col >= 2 && col <= 6) return html`<div class="c topline"></div>`;
      if (col === 8) return html`<div class="c h1 topline span2">【集計結果：顧客別】</div>`;
      if (col === 9) return nothing;
    }
    if (row === 2) {
      if (col <= 6) return html`<div class="c hd">${HEADS[col - 1]}</div>`;
      if (col === 8) return html`<div class="c hd hd2">顧客名</div>`;
      if (col === 9) return html`<div class="c hd hd2">金額</div>`;
    }
    if (row >= 3 && row <= 18 && col <= 6) {
      return html`<div class="c ${r3} ${col >= 4 ? 'r' : ''}">${ROWS[row - 3][col - 1]}</div>`;
    }
    if (col === 8 && row >= 3 && row <= 5) return html`<div class="c ${r3}">${CUSTOMERS[row - 3]}</div>`;
    if (col === 8 && row === 7) return html`<div class="c total">合計</div>`;
    return html`<div class="c ${last}"></div>`;
  }

  private sheet() {
    const rows = Array.from({ length: 20 }, (_, i) => i + 1);
    return html`<div class="gridwrap">
      <div class="grid">
        <div class="c corner">${icons.corner}</div>
        ${COLS.map((c, i) => html`<div class="c colh ${c === 'I' ? 'sel' : ''} ${i === 15 ? 'edge' : ''}">${c}</div>`)}
        ${rows.map((r) => html`
          <div class="c rowh ${r === 3 ? 'sel' : ''}">${r === 20 ? '' : r}</div>
          ${COLS.map((_, i) => this.cell(i + 1, r))}
        `)}
      </div>
      <div class="tip">SUMIF(範囲, 検索条件, [合計範囲])</div>
      <div class="redbox">=SUMIF(<i></i></div>
      <div class="badge">③</div>
    </div>`;
  }

  render() {
    return html`<div class="app">
      <div class="title">
        <div class="qat">
          ${icons.save}${icons.undo}${caret('#fff')}${icons.redo}${caret('#5f9d7d')}${icons.touch}${caret('#fff')}${icons.custom}
        </div>
        <div class="doc">売上管理表  -  Excel</div>
        <div class="winctl">
          <span>山田知美</span>
          <div>${icons.ribbonOpt}</div><div>${icons.min}</div><div>${icons.restore}</div><div>${icons.close}</div>
        </div>
      </div>
      <div class="tabs">
        <div class="tab file"><span class="tight4">ファイル</span></div>
        <div class="tab on"><span class="tight1">ホーム</span></div>
        <div class="tab">挿入</div>
        <div class="tab">描画</div>
        <div class="tab"><span class="tight3">ページ レイアウト</span></div>
        <div class="tab">数式</div>
        <div class="tab"><span class="tight3">データ</span></div>
        <div class="tab">校閲</div>
        <div class="tab">表示</div>
        <div class="tab">Power Pivot</div>
        <div class="tell">${icons.bulb}<span class="tight3">実行したい作業を入力してください</span></div>
        <div class="sharebox">${icons.share}<span>共有</span></div>
      </div>
      ${this.ribbon()}
      <div class="fbar">
        <div class="namebox"><span>INDEX</span>${caret('#666')}</div>
        <div class="fdots"><i></i><i></i><i></i></div>
        <div class="fbtns">${icons.x}${icons.check}<span class="fx">fx</span></div>
        <div class="finput"><span>=SUMIF(</span>${icons.expand}</div>
      </div>
      <div class="sheetrow">
        ${this.sheet()}
        <div class="vbar">
          <div class="sbtn"><svg width="9" height="5" viewBox="0 0 9 5"><path d="M4.500 0 9 5H0z" fill="#777"/></svg></div>
          <div class="vthumb"></div>
          <div class="vtrack"></div>
          <div class="sbtn"><svg width="9" height="5" viewBox="0 0 9 5"><path d="M0 0h9L4.500 5z" fill="#777"/></svg></div>
        </div>
      </div>
      <div class="tabbar">
        <div class="nav">
          <svg width="5" height="8" viewBox="0 0 5 8"><path d="M5 0v8L0 4z" fill="#c2c2c2"/></svg>
          <svg width="5" height="8" viewBox="0 0 5 8"><path d="M0 0v8l5-4z" fill="#c2c2c2"/></svg>
        </div>
        <div class="sheettab">売上一覧表</div>
        <div class="plus">${icons.plusC}</div>
        <div class="hdots"><i></i><i></i><i></i></div>
        <div class="hbar">
          <div class="sbtn"><svg width="5" height="8" viewBox="0 0 5 8"><path d="M5 0v8L0 4z" fill="#666"/></svg></div>
          <div class="hthumb"></div>
          <div class="htrack"></div>
          <div class="sbtn"><svg width="5" height="8" viewBox="0 0 5 8"><path d="M0 0v8l5-4z" fill="#666"/></svg></div>
        </div>
      </div>
      <div class="status">
        <span>入力</span>
        <span class="macro">${icons.macro}</span>
        <div class="statright">
          ${icons.viewNormal}${icons.viewPage}${icons.viewBreak}
          <svg width="7" height="2" viewBox="0 0 7 2"><rect width="7" height="2" fill="#a9a9a9"/></svg>
          <div class="slider"><i></i></div>
          <svg width="9" height="9" viewBox="0 0 9 9"><path d="M0 3.500h9v2H0zM3.500 0h2v9h-2z" fill="#a9a9a9"/></svg>
          <span class="zm">100%</span>
        </div>
      </div>
      <div class="bottomedge"><i></i></div>
    </div>`;
  }
}
